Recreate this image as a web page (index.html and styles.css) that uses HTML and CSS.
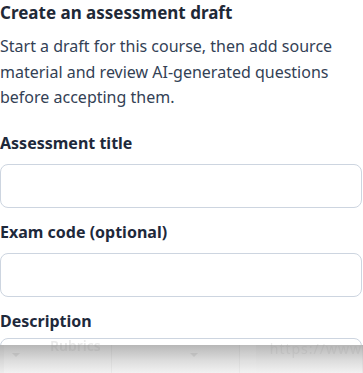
FILE: index.html
```html
<!DOCTYPE html>
<html lang="en">
<head>
    <meta charset="UTF-8">
    <meta name="viewport" content="width=device-width, initial-scale=1.0">
    <title>Create assessment draft</title>
    <link rel="stylesheet" href="styles.css">
</head>
<body>
    <div class="draft-panel">
        <h2 class="draft-title">Create an assessment draft</h2>
        <p class="draft-intro">Start a draft for this course, then add source material and review AI-generated questions before accepting them.</p>

        <form class="draft-form">
            <label class="field">
                <span class="field-label">Assessment title</span>
                <input type="text" class="field-input">
            </label>
            <label class="field">
                <span class="field-label">Exam code (optional)</span>
                <input type="text" class="field-input">
            </label>
            <label class="field field-last">
                <span class="field-label">Description</span>
                <textarea class="field-input field-area"></textarea>
            </label>
        </form>
    </div>

    <!-- sheet behind, fading in -->
    <div class="backdrop">
        <div class="ghost-col ghost-left">
            <span class="ghost-tab">Rubrics</span>
            <span class="ghost-caret"></span>
        </div>
        <div class="ghost-col ghost-mid">
            <span class="ghost-caret"></span>
        </div>
        <div class="ghost-col ghost-right">
            <span class="ghost-link">https://www</span>
        </div>
    </div>
</body>
</html>
```

FILE: styles.css
```css
body {
    margin: 0;
    font-family: "Noto Sans", "Open Sans", sans-serif;
    background: #fff;
    color: #1e293b;
    overflow: hidden;
}
.draft-panel {
    padding: 2px 1px 0 0;
}
.draft-title {
    margin: 0;
    font-size: 17px;
    line-height: 22px;
    font-weight: 700;
    color: #1f2937;
}
.draft-intro {
    margin: 10px 0 0;
    font-size: 16px;
    line-height: 25.5px;
    color: #334155;
}
.draft-form {
    display: flex;
    flex-direction: column;
    gap: 13px;
    margin-top: 21px;
}
.field {
    display: flex;
    flex-direction: column;
    gap: 10px;
}
.field-last {
    gap: 6px;
}
.field-label {
    font-size: 16px;
    line-height: 22px;
    font-weight: 700;
    color: #1e293b;
}
.field-input {
    box-sizing: border-box;
    width: 100%;
    height: 44px;
    margin: 0;
    border: 1px solid #cdd5e0;
    border-radius: 8px;
    background: #fff;
    font: inherit;
}
.field-area {
    height: 90px;
    resize: none;
}

/* faded sheet at the bottom */
.backdrop {
    position: fixed;
    left: 0;
    right: 0;
    bottom: 0;
    height: 28px;
    display: flex;
    background: linear-gradient(#b7b7b7, #dcdcdc 55%, #f2f2f2);
}
.ghost-col {
    position: relative;
    border-right: 1px solid rgba(0, 0, 0, 0.03);
}
.ghost-left {
    width: 118px;
    border-left: 4px solid rgba(0, 0, 0, 0.02);
}
.ghost-mid {
    width: 140px;
}
.ghost-right {
    flex: 1;
    padding-left: 14px;
    border-left: 16px solid rgba(255, 255, 255, 0.06);
}
.ghost-tab {
    position: absolute;
    left: 46px;
    top: -9px;
    font-size: 14px;
    font-weight: 600;
    color: rgba(140, 140, 140, 0.18);
}
.ghost-link {
    display: block;
    margin-top: -6px;
    font-size: 14px;
    color: rgba(140, 140, 140, 0.16);
    letter-spacing: 1px;
}
.ghost-caret {
    position: absolute;
    left: 8px;
    top: 8px;
    width: 0;
    height: 0;
    border-left: 4px solid transparent;
    border-right: 4px solid transparent;
    border-top: 4px solid rgba(140, 140, 140, 0.22);
}
.ghost-mid .ghost-caret {
    left: 78px;
}
```
